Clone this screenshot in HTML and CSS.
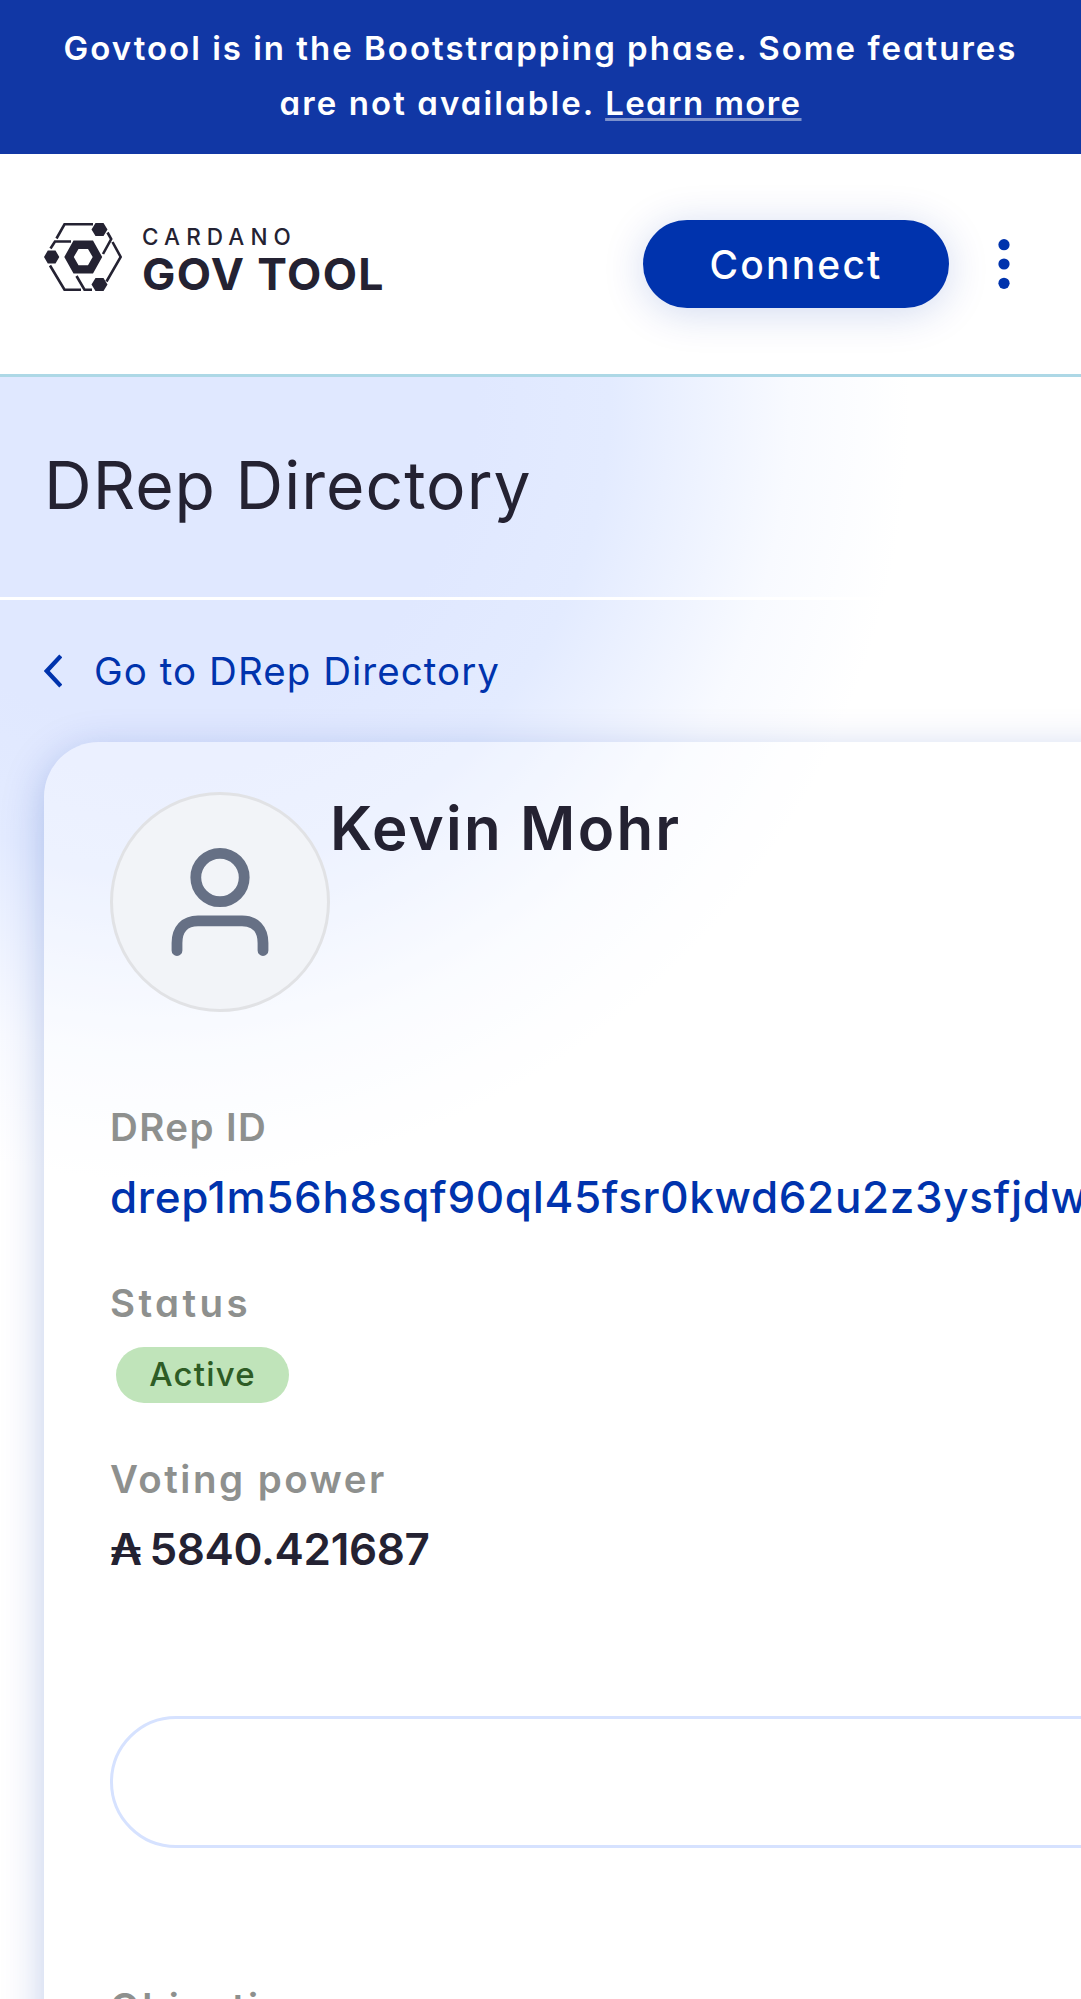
FILE: index.html
```html
<!DOCTYPE html>
<html lang="en">
<head>
<meta charset="utf-8">
<title>GovTool - DRep Directory</title>
<link rel="stylesheet" href="styles.css">
</head>
<body>
<div class="page">
  <div class="banner">
    <p class="banner-line banner-first">Govtool is in the Bootstrapping phase. Some features</p>
    <p class="banner-line banner-second">are not available. <a class="banner-link" href="#">Learn more</a></p>
  </div>
  <header class="topbar">
    <a class="logo" href="#" aria-label="Cardano GovTool">
      <svg class="logo-mark" viewBox="0 0 78 68" width="78" height="68" fill="none" stroke="#242232" stroke-width="2.6">
        <path d="M12.500 15.500 L20.500 1.300 H49"/>
        <path d="M6.500 25.500 L11 18.500 H27"/>
        <path d="M6 42.500 L20.500 66.700 H37"/>
        <path d="M32.500 53 L40.500 66.700 H48"/>
        <path d="M63.500 9.500 L67.200 16 L59 31"/>
        <path d="M68.500 19 L76.700 34 L62.500 58.500"/>
        <path stroke="none" fill="#242232" d="M51.500 0h8l4 6.500-4 6.500h-8l-4-6.500zM3.800 27.500h7.700l3.800 6.500-3.800 6.500H3.800L0 34zM51.500 55h8l4 6.500-4 6.500h-8l-4-6.500z"/>
        <path stroke="none" fill="#242232" fill-rule="evenodd" d="M29.500 17.500h19.500L58.200 34 49 50.500H29.500L20.300 34zM34.500 26L29.800 34l4.700 8.200h9.500L48.700 34 44 26z"/>
      </svg>
      <span class="logo-words">
        <span class="logo-top">CARDANO</span>
        <span class="logo-name">GOV TOOL</span>
      </span>
    </a>
    <div class="actions">
      <button class="connect">Connect</button>
      <svg class="menu-dots" viewBox="0 0 12 50" width="12" height="50" fill="#0033ad"><circle cx="6" cy="5.700" r="5.600"/><circle cx="6" cy="25" r="5.600"/><circle cx="6" cy="44.300" r="5.600"/></svg>
    </div>
  </header>
  <main class="content">
    <div class="title-row"><h1 class="title">DRep Directory</h1></div>
    <a class="back" href="#">
      <svg class="chevron" viewBox="0 0 18 34" width="18" height="34" fill="none" stroke="#0033ad" stroke-width="4.300"><path d="M16.800 2L2.800 17l14 15"/></svg>
      <span class="back-text">Go to DRep Directory</span>
    </a>
    <article class="card">
      <div class="person">
        <div class="avatar">
          <svg viewBox="0 0 98 110" width="98" height="110" fill="none" stroke="#667085" stroke-width="10.800" stroke-linecap="round"><circle cx="49" cy="30.500" r="24.200"/><path d="M6 103.500V96C6 82 14 73.800 27 73.800H71C84 73.800 92 82 92 96v7.500"/></svg>
        </div>
        <h2 class="name">Kevin Mohr</h2>
      </div>
      <dl class="facts">
        <div class="fact"><dt class="label-id">DRep ID</dt><dd class="drep-id">drep1m56h8sqf90ql45fsr0kwd62u2z3ysfjdw</dd></div>
        <div class="fact"><dt class="label-status">Status</dt><dd class="pill">Active</dd></div>
        <div class="fact"><dt class="label-power">Voting power</dt><dd class="power">₳ 5840.421687</dd></div>
      </dl>
      <button class="share" aria-label="Share"></button>
      <h3 class="objectives">Objectives</h3>
    </article>
  </main>
</div>
</body>
</html>
```
FILE: styles.css
```css
* { box-sizing: border-box; margin: 0; padding: 0; }
body { background: #fff; font-family: Inter, "Open Sans", sans-serif; font-feature-settings: "cv11"; color: #242232; white-space: nowrap; }
a { color: inherit; text-decoration: none; }
button { font: inherit; font-feature-settings: inherit; border: 0; }
.page { width: 1081px; height: 1999px; overflow: hidden; display: flex; flex-direction: column; }

.banner { height: 154px; flex: none; padding-top: 21px; background: #1137a5; color: #fff; text-align: center; font-size: 33px; font-weight: 600; }
.banner-line { line-height: 55px; }
.banner-first { letter-spacing: 2px; }
.banner-second { letter-spacing: 2.1px; }
.banner-link { letter-spacing: 1.4px; text-decoration: underline; text-decoration-color: rgba(255,255,255,.45); text-decoration-thickness: 3px; text-underline-offset: 3px; }

.topbar { height: 223px; flex: none; padding: 0 71px 0 44px; display: flex; align-items: center; justify-content: space-between; border-bottom: 3px solid #add8e6; background: #fff; }
.logo { display: flex; gap: 20px; margin-top: -9px; }
.logo-words { display: flex; flex-direction: column; }
.logo-top { font-size: 22.5px; font-weight: 500; line-height: 27px; letter-spacing: 6.1px; }
.logo-name { font-size: 44.5px; font-weight: 650; line-height: 44px; margin-top: 2px; letter-spacing: 1.4px; }
.actions { display: flex; align-items: center; gap: 49px; }
.connect { width: 306px; height: 88px; border-radius: 44px; background: #0033ad; color: #fff; font-size: 39px; font-weight: 500; letter-spacing: 2.2px; box-shadow: 0 5px 41px rgba(0,51,173,.18); }

.content { flex: 1; background: radial-gradient(ellipse 750px 780px at 160px 23px, #e0e8ff 42%, #e3ebff 60%, #f8faff 84%, #fff 100%); }
.title-row { height: 223px; padding-left: 44px; border-bottom: 3px solid #fff; }
.title { font-size: 66px; font-weight: 400; line-height: 217px; letter-spacing: 1px; }
.back { height: 142px; padding-left: 44px; display: flex; align-items: center; gap: 32px; color: #0033ad; font-size: 38.5px; letter-spacing: 1.05px; }
.card { width: 1400px; height: 1500px; padding: 50px 66px 0; border-radius: 55px; background: rgba(255,255,255,.35); box-shadow: 0 10px 41px rgba(0,51,173,.25); margin-left: 44px; }
.person { display: flex; height: 220px; }
.avatar { width: 220px; height: 220px; display: flex; align-items: center; justify-content: center; border: 3px solid #e1e2e5; border-radius: 50%; background: #f2f4f8; }
.name { font-size: 60px; font-weight: 600; line-height: 73px; letter-spacing: 2.2px; }
.facts { margin-top: 88px; height: 616px; }
.fact { height: 176px; }
.fact dt, .objectives { font-size: 38.5px; font-weight: 600; line-height: 55px; color: #8e908e; letter-spacing: 2.6px; }
.fact .label-id { letter-spacing: 1.4px; }
.fact .label-status { letter-spacing: 3.4px; }
.fact .label-power { letter-spacing: 2.5px; }
.drep-id { margin-top: 10px; font-size: 44px; font-weight: 500; line-height: 65px; color: #0033ad; letter-spacing: .65px; }
.pill { margin: 16px 0 0 6px; width: 173px; height: 56px; border-radius: 28px; background: #c0e4ba; color: #2e5c25; font-size: 33px; font-weight: 500; line-height: 55px; text-align: center; letter-spacing: 1.2px; }
.power { margin-top: 10px; font-size: 44px; font-weight: 600; line-height: 65px; letter-spacing: -.35px; word-spacing: -3px; }
.share { display: block; width: 1268px; height: 132px; border: 3px solid #d6e2ff; border-radius: 66px; background: transparent; }
.objectives { margin-top: 132px; }
```
